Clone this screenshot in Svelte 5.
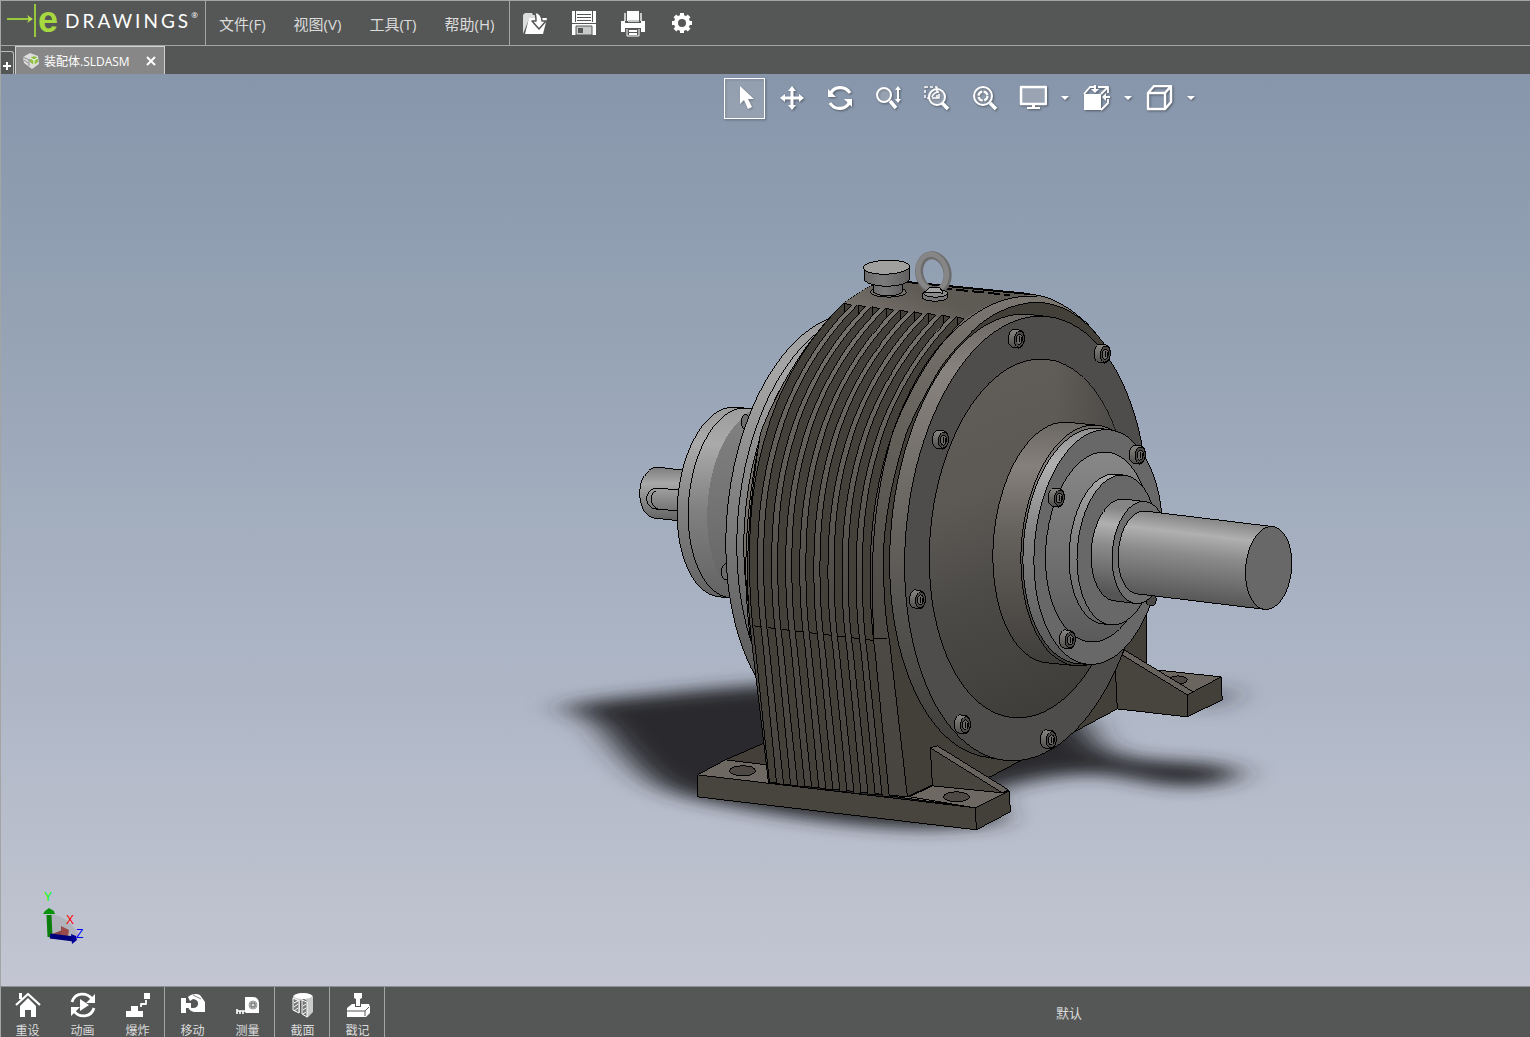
<script lang="ts">
  type Pt = [number, number];

  let activeTool = $state('select');

  const menus = ['文件(F)', '视图(V)', '工具(T)', '帮助(H)'];
  const fileTools = [
    { id: 'open', label: '打开' },
    { id: 'save', label: '保存' },
    { id: 'print', label: '打印' },
    { id: 'options', label: '选项' }
  ];
  const viewTools = [
    { id: 'select', label: '选择' },
    { id: 'pan', label: '平移' },
    { id: 'rotate', label: '旋转' },
    { id: 'zoom', label: '放大或缩小' },
    { id: 'zoom-area', label: '局部放大' },
    { id: 'zoom-fit', label: '整屏显示全图' }
  ];
  const viewMenus = [
    { id: 'display', label: '显示' },
    { id: 'orient', label: '视图定向' },
    { id: 'style', label: '显示样式' }
  ];
  const groups = [
    [{ id: 'home', label: '重设' }, { id: 'play', label: '动画' }, { id: 'explode', label: '爆炸' }],
    [{ id: 'move', label: '移动' }, { id: 'measure', label: '测量' }],
    [{ id: 'section', label: '截面' }],
    [{ id: 'stamp', label: '戳记' }]
  ];

  // every disc of the gearbox lies in the same plane, so they share one skew
  const SKEW = 0.063;

  function disc(cx: number, cy: number, a: number, b: number): Pt[] {
    const pts: Pt[] = [];
    for (let i = 0; i < 96; i++) {
      const t = (i / 96) * Math.PI * 2;
      const dx = a * Math.cos(t);
      const dy = b * Math.sin(t);
      pts.push([cx + dx - SKEW * dy, cy + dy]);
    }
    return pts;
  }

  function toPath(pts: Pt[]) {
    return 'M' + pts.map((p) => p[0].toFixed(1) + ' ' + p[1].toFixed(1)).join('L') + 'Z';
  }

  function hull(points: Pt[]): Pt[] {
    const pts = [...points].sort((p, q) => p[0] - q[0] || p[1] - q[1]);
    const cross = (o: Pt, a: Pt, b: Pt) => (a[0] - o[0]) * (b[1] - o[1]) - (a[1] - o[1]) * (b[0] - o[0]);
    const half = (list: Pt[]) => {
      const out: Pt[] = [];
      for (const p of list) {
        while (out.length > 1 && cross(out[out.length - 2], out[out.length - 1], p) <= 0) out.pop();
        out.push(p);
      }
      out.pop();
      return out;
    };
    return [...half(pts), ...half(pts.reverse())];
  }

  const face = (cx: number, cy: number, a: number, b: number) => toPath(disc(cx, cy, a, b));
  const barrel = (p: number[], q: number[]) =>
    toPath(hull([...disc(p[0], p[1], p[2], p[3]), ...disc(q[0], q[1], q[2], q[3])]));

  const grooves = [0, 1, 2, 3, 4, 5, 6, 7, 8];
  const flangeBolts: Pt[] = [[1016, 339], [1102, 354], [940, 440], [917, 600], [962, 725], [1048, 740]];
  const hubBolts: Pt[] = [[1056, 498], [1137, 455], [1067, 640]];
</script>

{#snippet bolt(x: number, y: number)}
  <path d={barrel([x - 3, y - 1, 5, 9], [x + 3, y, 5, 9])} fill="url(#boltSide)" stroke="#000" />
  <path d={face(x + 3, y, 5, 8)} fill="#4a4947" stroke="#000" />
  <path d={face(x + 3, y, 3, 5)} fill="#6b6865" stroke="#000" />
  <path d="M{x + 3} {y - 3}v6M{x + 5} {y - 2}v5" stroke="#000" />
{/snippet}

{#snippet icon(id: string)}
  <svg class="icon" width="28" height="28" viewBox="0 0 28 28" fill="none" stroke-linejoin="round" aria-hidden="true">
    {#if id === 'open'}
      <path d="M2 25V6l2-2h7l1 2h6v4H8z" fill="#dcdedd" />
      <path d="M4 25 8 9h18l-4 16z" fill="#fff" />
      <path d="M13 3c6 0 8 5 8 9h4l-7 8-7-8h4c0-4 0-7-2-9z" fill="#fff" stroke="#555756" stroke-width="1.5" />
    {:else if id === 'save'}
      <path d="M2 2h24v24H2z" fill="#fff" />
      <path d="M5.5 2v11M22.5 2v11M7 5.5h14M7 8.5h14M7 11.5h14M2 14.5h24" stroke="#555756" />
      <path d="M6 17h16v9H6z" fill="#c8caca" stroke="#555756" />
      <path d="M8 19h5v5H8z" fill="#555756" />
    {:else if id === 'print'}
      <path d="M8 2h12v10H8z" fill="#fff" />
      <path d="M6 4v8M22 4v8M9 12h11" stroke="#c8caca" stroke-width="2" />
      <path d="M2 12h4v2h16v-2h4v11h-4v-4H6v4H2z" fill="#fff" />
      <path d="M9.500 20.500h9v6h-9zM9.500 23.500h9" fill="#fff" stroke="#555756" />
      <path d="M8 20v7h12v-7" stroke="#fff" />
    {:else if id === 'options'}
      <circle cx="14" cy="14" r="6" stroke="#fff" stroke-width="4" />
      {#each [0, 45, 90, 135, 180, 225, 270, 315] as a}
        <path d="M12 4h4v3h-4z" fill="#fff" transform="rotate({a} 14 14)" />
      {/each}
    {:else if id === 'select'}
      <path d="M9 1v18l4-4 4 9 4-2-4-8h6z" fill="#fff" />
    {:else if id === 'pan'}
      <path d="M13 5v16M5 13h16" stroke="#fff" stroke-width="3" />
      <path d="m13 1 4 5H9zM13 25l4-5H9zM1 13l5-4v8zM25 13l-5-4v8z" fill="#fff" />
    {:else if id === 'rotate'}
      <path d="M3 10C6 1 18 0 23 8M23 16C20 25 8 26 3 18" stroke="#fff" stroke-width="3.200" />
      <path d="M1 4v8h8zM25 22v-8h-8z" fill="#fff" />
    {:else if id === 'zoom'}
      <circle cx="9" cy="10" r="7" fill="#ffffff30" stroke="#fff" stroke-width="2" />
      <path d="m15 16 6 7" stroke="#fff" stroke-width="3.500" />
      <path d="M23 4v12" stroke="#fff" stroke-width="2" />
      <path d="m23 1 3 4h-6zM23 18l3-4h-6z" fill="#fff" />
    {:else if id === 'zoom-area'}
      <path d="M2 2h12v11H2z" stroke="#fff" stroke-width="1.500" stroke-dasharray="3 2" />
      <circle cx="14" cy="12" r="8" fill="#ffffff30" stroke="#fff" stroke-width="2" />
      <path d="M9 12c1-3 3-5 7-5M12 13h4V9" stroke="#fff" stroke-width="1.500" />
      <path d="m19 18 6 6" stroke="#fff" stroke-width="3.500" />
    {:else if id === 'zoom-fit'}
      <circle cx="12" cy="11" r="9" fill="#ffffff20" stroke="#fff" stroke-width="2" />
      <circle cx="12" cy="11" r="4.500" stroke="#fff" stroke-width="2.200" stroke-dasharray="5.600 1.500" />
      <path d="m19 18 6 6" stroke="#fff" stroke-width="3.500" />
    {:else if id === 'display'}
      <path d="M2 2h25v17H2z" fill="#9aa4b3" stroke="#fff" stroke-width="2.500" />
      <path d="M13 19h3v3h5v2H8v-2h5z" fill="#fff" />
    {:else if id === 'orient'}
      <path d="M2 9h17v16H2z" fill="#fff" />
      <path d="m2 9 6-7h4M16 2h10M19 9l7-7v6M26 14v4l-7 7" stroke="#fff" stroke-width="1.800" />
      <path d="M13 0v5M28 12h-5" stroke="#fff" stroke-width="2" />
      <path d="m13 8 4-4H9zM20 12l4-4v8z" fill="#fff" />
    {:else if id === 'style'}
      <path d="M3 8h17v16H3zM3 8l6-7h17l-6 7M26 1v16l-6 7" stroke="#fff" stroke-width="2.400" />
    {:else if id === 'home'}
      <path d="M5 2h3v6H5z" fill="#fff" />
      <path d="M2 14 14 3l12 11" stroke="#fff" stroke-width="2.200" />
      <path d="m6 15 8-8 8 8v11h-5v-7h-6v7H6z" fill="#fff" />
    {:else if id === 'play'}
      <path d="M3 11C6 1 18 1 23 8M25 17C22 27 10 27 5 20" stroke="#fff" stroke-width="2.800" />
      <path d="M26 3v9h-9zM2 25v-9h9zM11 8l9 6-9 6z" fill="#fff" />
    {:else if id === 'explode'}
      <path d="M2 26v-6h5v-5h7v5h5v6zM20 2h6v6h-6z" fill="#fff" />
      <path d="M17 16v-3h5v-4" stroke="#fff" stroke-width="1.800" />
    {:else if id === 'move'}
      <path d="M2 7h5v5h5v5H7v5H2z" fill="#fff" />
      <path d="M9 6c3-3 8-4 12-2l5 7v10h-9c-4 0-7-2-8-5l4 1c8 1 8-9 1-9l-3 2z" fill="#fff" />
      <path d="m14 4 8 4" stroke="#888" />
    {:else if id === 'measure'}
      <path d="M11 6h8c4 0 6 3 6 7v9H12c-1 0-1-2-1-4z" fill="#fff" />
      <circle cx="19" cy="14" r="4" fill="#d7d8d8" stroke="#999" />
      <path d="M17 12h4v4h-4z" stroke="#555756" />
      <path d="M3 20h9M3 18v5M6 20v3M9 20v3" stroke="#fff" stroke-width="1.600" />
    {:else if id === 'section'}
      <path d="M4 6c0-5 20-5 20 0v15l-6 6V10l-3-2-4 2v12l-7-3z" fill="#c9caca" />
      <ellipse cx="14" cy="5" rx="9" ry="3" fill="#fff" />
      <path d="m4 7 6 3v12l-6-3zM13 9l5 2v15l-5-3z" fill="#777" stroke="#fff" />
      <path d="m5 12 4-2M5 16l4-3M5 20l4-3M14 15l3-2M14 19l3-2M14 23l3-2" stroke="#fff" />
    {:else if id === 'stamp'}
      <path d="M10 2h8v5l-2 1v7h-4V8l-2-1z" fill="#fff" />
      <path d="m3 17 5-4h3v3h6v-3h8l1 3v6l-4 4H3z" fill="#fff" />
      <path d="M3 20h18l4-4M21 20v5" stroke="#555756" />
    {/if}
  </svg>
{/snippet}

<div class="app">
  <header class="menubar">
    <a class="logo" href="#home" aria-label="eDrawings">
      <svg width="32" height="36" viewBox="0 0 32 36" aria-hidden="true">
        <path d="M1 17h25M29 2v33" stroke="#97c83c" stroke-width="2" />
        <path d="m27 17-6-4 2 4-2 4z" fill="#b7e04b" />
      </svg>
      <span class="logo-e">e</span>
      <span class="logo-word">DRAWINGS</span><span class="reg">®</span>
    </a>
    <nav>
      {#each menus as item}
        <button>{item}</button>
      {/each}
    </nav>
    <div class="file-tools">
      {#each fileTools as tool}
        <button aria-label={tool.label}>{@render icon(tool.id)}</button>
      {/each}
    </div>
  </header>

  <div class="tabs">
    <button class="add" aria-label="添加">
      <svg width="10" height="10" viewBox="0 0 10 10" aria-hidden="true"><path d="M5 1v8M1 5h8" stroke="#fff" stroke-width="2" /></svg>
    </button>
    <div class="tab">
      <svg width="18" height="18" viewBox="0 0 18 18" aria-hidden="true">
        <path d="M1 5 8 1l8 3 1 8-7 5-8-6z" fill="#dcdcdc" />
        <path d="m1 5 6 3v6M7 8l2-1M2 8l4 3" stroke="#888" fill="none" />
        <path d="m8 6 4-2 4 2v4l-4 3-4-3z" fill="#8fc043" />
        <path d="m8 6 4 2 4-2M12 8v5" stroke="#fff" fill="none" />
      </svg>
      <span>装配体.SLDASM</span>
      <button class="close" aria-label="关闭">
        <svg width="10" height="10" viewBox="0 0 10 10" aria-hidden="true"><path d="m1 1 8 8M9 1 1 9" stroke="#fff" stroke-width="2" /></svg>
      </button>
    </div>
  </div>

  <main class="viewport">
    <svg class="scene" viewBox="0 74 1530 912" preserveAspectRatio="xMidYMid meet" fill="none" role="img" aria-label="装配体">
      <defs>
        <linearGradient id="body" gradientUnits="userSpaceOnUse" x1="0" y1="285" x2="0" y2="790">
          <stop offset="0" stop-color="#7c7871" />
          <stop offset=".3" stop-color="#635f59" />
          <stop offset=".65" stop-color="#4d4a45" />
          <stop offset="1" stop-color="#484540" />
        </linearGradient>
        <linearGradient id="roof" gradientUnits="userSpaceOnUse" x1="900" y1="280" x2="880" y2="325">
          <stop offset="0" stop-color="#5e5a54" />
          <stop offset="1" stop-color="#77726b" />
        </linearGradient>
        <linearGradient id="band" gradientUnits="userSpaceOnUse" x1="0" y1="314" x2="0" y2="760">
          <stop offset="0" stop-color="#6b6762" />
          <stop offset=".13" stop-color="#88837e" />
          <stop offset=".35" stop-color="#716d68" />
          <stop offset=".65" stop-color="#565451" />
          <stop offset="1" stop-color="#3f3d3a" />
        </linearGradient>
        <linearGradient id="cone" gradientUnits="userSpaceOnUse" x1="960" y1="400" x2="1070" y2="700">
          <stop offset="0" stop-color="#605d58" />
          <stop offset=".3" stop-color="#5c5955" />
          <stop offset=".6" stop-color="#4c4a47" />
          <stop offset="1" stop-color="#403e3b" />
        </linearGradient>
        <linearGradient id="coneShade" gradientUnits="userSpaceOnUse" x1="1055" y1="0" x2="1120" y2="0">
          <stop offset="0" stop-color="#484643" stop-opacity="0" />
          <stop offset="1" stop-color="#484643" stop-opacity=".8" />
        </linearGradient>
        <linearGradient id="hub" gradientUnits="userSpaceOnUse" x1="0" y1="422" x2="0" y2="666">
          <stop offset="0" stop-color="#6b6762" />
          <stop offset=".18" stop-color="#85807b" />
          <stop offset=".45" stop-color="#65615d" />
          <stop offset="1" stop-color="#3f3d3a" />
        </linearGradient>
        <linearGradient id="ring" gradientUnits="userSpaceOnUse" x1="0" y1="428" x2="0" y2="666">
          <stop offset="0" stop-color="#909090" />
          <stop offset=".15" stop-color="#b0b0b0" />
          <stop offset=".45" stop-color="#828282" />
          <stop offset="1" stop-color="#555" />
        </linearGradient>
        <linearGradient id="recess" gradientUnits="userSpaceOnUse" x1="0" y1="450" x2="0" y2="642">
          <stop offset="0" stop-color="#888" />
          <stop offset=".5" stop-color="#737373" />
          <stop offset="1" stop-color="#5a5a5a" />
        </linearGradient>
        <linearGradient id="shaft" gradientUnits="userSpaceOnUse" x1="1205" y1="518" x2="1195" y2="603">
          <stop offset="0" stop-color="#858585" />
          <stop offset=".2" stop-color="#b0b0b0" />
          <stop offset=".45" stop-color="#8b8b8b" />
          <stop offset="1" stop-color="#555" />
        </linearGradient>
        <linearGradient id="rear" gradientUnits="userSpaceOnUse" x1="0" y1="400" x2="0" y2="620">
          <stop offset="0" stop-color="#999" />
          <stop offset=".2" stop-color="#aaa" />
          <stop offset=".5" stop-color="#808080" />
          <stop offset="1" stop-color="#5b5b5b" />
        </linearGradient>
        <linearGradient id="rearCone" gradientUnits="userSpaceOnUse" x1="0" y1="400" x2="0" y2="640">
          <stop offset="0" stop-color="#838383" />
          <stop offset=".5" stop-color="#717171" />
          <stop offset="1" stop-color="#5c5c5c" />
        </linearGradient>
        <linearGradient id="rearFlange" gradientUnits="userSpaceOnUse" x1="0" y1="315" x2="0" y2="690">
          <stop offset="0" stop-color="#9c9c9c" />
          <stop offset=".15" stop-color="#a6a6a6" />
          <stop offset=".5" stop-color="#808080" />
          <stop offset="1" stop-color="#585858" />
        </linearGradient>
        <linearGradient id="rearShaft" x1="0" y1="0" x2="0" y2="1">
          <stop offset="0" stop-color="#7d7d7d" />
          <stop offset=".3" stop-color="#a8a8a8" />
          <stop offset="1" stop-color="#5f5f5f" />
        </linearGradient>
        <linearGradient id="boltSide" x1="0" y1="0" x2="0" y2="1">
          <stop offset="0" stop-color="#8a8783" />
          <stop offset="1" stop-color="#4e4c4a" />
        </linearGradient>
        <linearGradient id="cap" x1="0" y1="0" x2="1" y2="0">
          <stop offset="0" stop-color="#6a6a6a" />
          <stop offset=".4" stop-color="#7c7c7c" />
          <stop offset="1" stop-color="#606060" />
        </linearGradient>
        <filter id="soft" x="-30%" y="-60%" width="160%" height="220%"><feGaussianBlur stdDeviation="18 8" /></filter>
        <clipPath id="coneClip"><path d={face(1029, 538.5, 99.5, 179.5)} /></clipPath>
      </defs>

      <g filter="url(#soft)" fill="#2a2b2f">
        <path d="M556 708C600 698 650 696 690 691L800 682 960 720 1000 824 930 829C850 828 770 814 700 800 650 790 640 772 620 752 605 735 600 715 556 708Z" />
        <path d="M950 740 1085 715C1088 736 1096 750 1130 758 1170 764 1225 760 1240 773 1225 788 1180 790 1145 782 1100 770 1060 768 960 800Z" />
        <path d="M1180 690l44-4 14 10-36 16z" opacity=".5" />
      </g>

      <g shape-rendering="crispEdges" stroke="#000">
        <!-- input shaft and rear cover -->
        <path d="M690 471 656 467C634 470 634 514 653 518L690 522Z" fill="url(#rearShaft)" />
        <path d="M680 490 656 488C643 490 643 507 655 509L680 511" />
        <path d="M655 491C649 494 649 505 657 509" />
        <path d={barrel([727, 502, 50, 95], [737, 503, 50, 95])} fill="url(#rear)" />
        <path d={barrel([738, 503, 50, 95], [755, 505, 49, 93])} fill="url(#rear)" />
        <path d={barrel([755, 505, 48, 94], [842, 517, 98, 180])} fill="url(#rearCone)" stroke="none" />
        <ellipse cx="745" cy="422" rx="4" ry="8" fill="#6b6b6b" />
        <ellipse cx="725" cy="572" rx="4" ry="8" fill="#6b6b6b" />
        <path d={barrel([842, 521, 116, 208], [853, 522, 116, 208])} fill="url(#rearFlange)" />
        <path d={face(853, 522, 116, 208)} />
        <path d={face(860, 523, 116, 208)} fill="#77736c" />

        <!-- right foot -->
        <path d="M1145 668 1156 670 1221 677 1187 695 1117 690Z" fill="#6a665f" />
        <ellipse cx="1178" cy="680" rx="9" ry="4" fill="#4d4843" />
        <path d="M1187 695 1221 677 1222 700 1187 717Z" fill="#433f39" />
        <path d="M1120 560H1146V664L1117 709Z" fill="#413d37" />

        <!-- left foot plate -->
        <path d="M697 775 725 760 764 743 800 790Z" fill="#443f39" />
        <path d="M697 775 725 760 800 769V790Z" fill="#6d6962" />
        <ellipse cx="742" cy="771" rx="13" ry="5" fill="#4d4843" />
        <path d="M860 792 935 780 1009 791 975 808Z" fill="#6d6962" />
        <path d="M697 775 975 808 976 830 697 797Z" fill="#48453f" />
        <path d="M975 808 1009 791 1010 812 976 830Z" fill="#433f39" />

        <!-- housing -->
        <path d="M843 303 866 288C880 281 895 281 910 283L1037 295C1062 299 1090 322 1108 350L1146 600 1115 710 990 777 932 785 907 797 768 783 751 640C744 580 746 520 760 433 772 400 800 345 843 303Z" fill="url(#body)" />
        <path d="M843 303 866 288C880 281 895 281 910 283L1032 295C1000 296 980 308 962 321Z" fill="url(#roof)" stroke="none" />
        {#each grooves as i}
          <g transform="translate({i * 14.1} {i * 1.7})">
            <path
              d="M843 303C800 346 776 396 766 433 752 478 749 520 749 560 749 600 752 625 754 640L769 783 776 783 762 640C758 610 757 590 757 560 757 520 761 480 774 436 785 398 811 344 851 305Z"
              fill="#433f39"
            />
            <path d="M844 303V312M753 626 761 627" />
          </g>
        {/each}
        <path d="M750 640C741 570 746 510 757 450M873 640V629C870 560 872 500 893 430 910 385 930 348 965 321 990 302 1010 295 1037 296" />
        <path d="M873 639H887" />
        <path d="M1035 302C1010 304 990 314 973 330 960 343 948 356 940 368 925 393 914 414 906 433 893 474 883 520 883 560 883 590 885 620 889 640L907 797 932 785 990 777 1117 709 1146 664V600L1107 348C1088 322 1068 303 1035 302Z" fill="#433f39" />
        <path d="M908 282 1030 294" stroke-width="2" />
        <path d="M940 288 1010 295" stroke-dasharray="12 4" stroke-width="2" />

        <!-- gussets -->
        <path d="M1115 667 1122 655 1187 695V717L1117 709Z" fill="#48453f" />
        <path d="M1122 655 1124 650 1193 692 1187 695Z" fill="#67635c" />
        <path d="M909 797 932 786 1002 793 1009 791 975 808Z" fill="#6d6962" />
        <path d="M930 748 932 786 1002 793Z" fill="#48453f" />
        <path d="M930 748 937 746 1008 790 1002 793Z" fill="#67635c" />
        <ellipse cx="956" cy="797" rx="13" ry="5" fill="#4d4843" />

        <!-- output flange -->
        <path d={barrel([1009, 536, 119, 222], [1026, 538.5, 121, 222.5])} fill="url(#band)" />
        <path d={face(1026, 538.5, 121, 222.5)} fill="#4e4d4b" />
        <path d={face(1029, 538.5, 99.5, 179.5)} fill="url(#cone)" />
        <path d="M1050 350h90v240h-90z" fill="url(#coneShade)" clip-path="url(#coneClip)" stroke="none" />
        {#each flangeBolts as [x, y]}
          {@render bolt(x, y)}
        {/each}

        <path d={barrel([1057, 542.5, 64, 120.5], [1086, 545.5, 65, 120.5])} fill="url(#hub)" />
        <path d={face(1086, 545.5, 65, 120.5)} />
        <path d={barrel([1088, 546, 65, 118], [1098, 547, 64, 117.5])} fill="url(#ring)" />
        <path d={face(1098, 547, 64, 117.5)} fill="#686868" />
        <path d={face(1098, 547, 52.5, 95)} fill="url(#recess)" />
        {#each hubBolts as [x, y]}
          {@render bolt(x, y)}
        {/each}
        <path d={barrel([1109, 549, 40, 75], [1117, 550, 40, 75])} fill="url(#ring)" />
        <path d={face(1117, 550, 40, 75)} fill="#686868" />
        <path d={face(1151, 600, 5, 6)} fill="#4a4947" />
        <path d={barrel([1119, 550, 28, 51], [1140, 552.5, 28, 51])} fill="url(#shaft)" />
        <path d={face(1140, 552.5, 28, 51)} fill="#6e6e6e" />
        <path d={barrel([1141, 552.5, 23, 41.5], [1268.5, 568, 23, 41.5])} fill="url(#shaft)" />
        <path d={face(1268.5, 568, 23, 41.5)} fill="#686868" />

        <!-- breather cap -->
        <ellipse cx="888" cy="292" rx="18" ry="5" fill="#77736c" />
        <path d="M873 282v10c6 5 24 5 29 0v-10z" fill="url(#cap)" />
        <path d="M864 268v12c6 8 38 8 45 0v-14z" fill="url(#cap)" />
        <ellipse cx="886" cy="267" rx="23" ry="7" fill="#a0a09e" transform="rotate(-2 886 267)" />
      </g>

      <!-- lifting eye -->
      <ellipse cx="933" cy="273" rx="14" ry="18" stroke="#6c6c6c" stroke-width="8" transform="rotate(-14 933 273)" />
      <ellipse cx="932" cy="272" rx="14" ry="18" stroke="#868686" stroke-width="5" transform="rotate(-14 932 272)" />
      <g shape-rendering="crispEdges" stroke="#000">
        <path d="M922 293v5c3 4 22 4 25 0v-5z" fill="#777" />
        <ellipse cx="935" cy="293" rx="12" ry="4" fill="#8c8c8c" />
        <path d="M924 292 930 287H939L943 293Z" fill="#a2a2a2" />
      </g>
    </svg>

    <div class="view-tools">
      {#each viewTools as tool}
        <button class:active={activeTool === tool.id} aria-label={tool.label} onclick={() => (activeTool = tool.id)}>
          {@render icon(tool.id)}
        </button>
      {/each}
      <div class="drops">
        {#each viewMenus as tool}
          <button class="drop" aria-label={tool.label}>
            {@render icon(tool.id)}
            <svg width="8" height="5" viewBox="0 0 8 5" aria-hidden="true"><path d="M0 0h8L4 4z" fill="#fff" /></svg>
          </button>
        {/each}
      </div>
    </div>

    <svg class="triad" width="52" height="58" viewBox="0 0 52 58" aria-hidden="true">
      <path d="M10 26C22 27 35 37 40 50L12 50z" fill="#a9acb3" opacity=".7" />
      <path d="M11 49 24 44" stroke="#844" stroke-width="5" />
      <path d="m21 38 8 4-1 6-7 2z" fill="#9a4a4a" />
      <path d="M10 49 9 27" stroke="#0a7d0a" stroke-width="5" />
      <path d="m3 26 2-3 4-3 5 3 1 3z" fill="#089408" />
      <path d="M10 48 34 51" stroke="#00007d" stroke-width="5" />
      <path d="m31 46 5 2 1 4-5 4z" fill="#000096" />
      <text x="4" y="13" fill="#0f0">Y</text>
      <text x="26" y="36" fill="#f00">X</text>
      <text x="36" y="50" fill="#00f">Z</text>
    </svg>
  </main>

  <footer>
    {#each groups as group}
      <div class="group">
        {#each group as tool}
          <button>
            {@render icon(tool.id)}
            <span>{tool.label}</span>
          </button>
        {/each}
      </div>
    {/each}
    <span class="status">默认</span>
  </footer>
</div>

<style>
  :global(body) {
    background: #555756;
  }

  .app {
    display: flex;
    flex-direction: column;
    box-sizing: border-box;
    height: 100vh;
    border-left: 1px solid #a3a5a4;
    background: #555756;
    color: #dcdcdc;
    font-family: 'Open Sans', 'Noto Sans CJK SC', sans-serif;
  }

  button {
    display: flex;
    align-items: center;
    justify-content: center;
    padding: 0;
    border: none;
    background: none;
    color: inherit;
    font: inherit;
    cursor: pointer;
  }

  .menubar {
    display: flex;
    flex: none;
    height: 44px;
    border-top: 1px solid #a3a5a4;
    border-bottom: 1px solid #a3a5a4;
  }

  .logo {
    display: flex;
    align-items: center;
    box-sizing: border-box;
    width: 205px;
    padding-left: 5px;
    padding-bottom: 6px;
    border-right: 1px solid #a3a5a4;
    color: #fff;
    text-decoration: none;
    white-space: nowrap;
  }

  .logo-e {
    color: #a6d83f;
    font-family: 'Liberation Sans', sans-serif;
    font-size: 36px;
    font-weight: 700;
    line-height: 36px;
  }

  .logo-word {
    margin-left: 7px;
    font-family: Lato, sans-serif;
    font-size: 19px;
    letter-spacing: 3px;
  }

  .reg {
    padding-bottom: 12px;
    font-size: 8px;
  }

  nav {
    display: flex;
    gap: 28px;
    padding: 0 15px 0 13px;
    border-right: 1px solid #a3a5a4;
    font-size: 15px;
  }

  .file-tools {
    display: flex;
    gap: 21px;
    padding-left: 11px;
  }

  .tabs {
    display: flex;
    flex: none;
    align-items: flex-end;
    height: 28px;
  }

  .add {
    box-sizing: border-box;
    width: 13px;
    height: 23px;
    padding-top: 6px;
    border-top: 1px solid #b8bab9;
    border-right: 1px solid #b8bab9;
    border-radius: 0 3px 0 0;
  }

  .tab {
    display: flex;
    align-items: center;
    gap: 4px;
    box-sizing: border-box;
    height: 28px;
    margin-left: 1px;
    padding: 0 8px 0 6px;
    border: 1px solid #d0d0d0;
    border-bottom: none;
    background: #878787;
    color: #fff;
    font-size: 12px;
  }

  .close {
    margin-left: 12px;
  }

  .viewport {
    position: relative;
    display: flex;
    flex: 1;
    min-height: 0;
    background: linear-gradient(#8796ab, #97a4b6 30%, #abb4c4 62%, #c3c6d2);
  }

  .scene {
    flex: 1;
    min-width: 0;
    height: 100%;
  }

  .view-tools {
    position: absolute;
    top: 4px;
    left: 723px;
    display: flex;
    gap: 7px;
  }

  .view-tools button {
    box-sizing: border-box;
    width: 41px;
    height: 41px;
    border: 1px solid transparent;
    filter: drop-shadow(1px 1px 1px #0006);
  }

  .view-tools button.active {
    border-color: #fff;
    background: #ffffff2b;
  }

  .drops {
    display: flex;
    gap: 7px;
    margin-left: 4px;
  }

  .drops .drop {
    gap: 14px;
    width: 56px;
  }

  .triad {
    position: absolute;
    bottom: 40px;
    left: 39px;
    font-family: 'Liberation Sans', sans-serif;
    font-size: 12px;
  }

  footer {
    display: flex;
    flex: none;
    align-items: center;
    height: 50px;
    margin-left: -1px;
    border-top: 1px solid #8d9095;
  }

  .group {
    display: flex;
    height: 100%;
    border-right: 1px solid #a3a5a4;
  }

  .group button {
    flex-direction: column;
    justify-content: flex-start;
    gap: 3px;
    width: 55px;
    margin-right: -1px;
    padding-top: 4px;
    font-size: 12px;
    line-height: 18px;
  }

  .group button:not(:last-child) {
    margin-right: 0;
  }

  .icon {
    flex: none;
  }

  .status {
    margin-left: auto;
    margin-right: 448px;
    font-size: 13px;
  }
</style>
